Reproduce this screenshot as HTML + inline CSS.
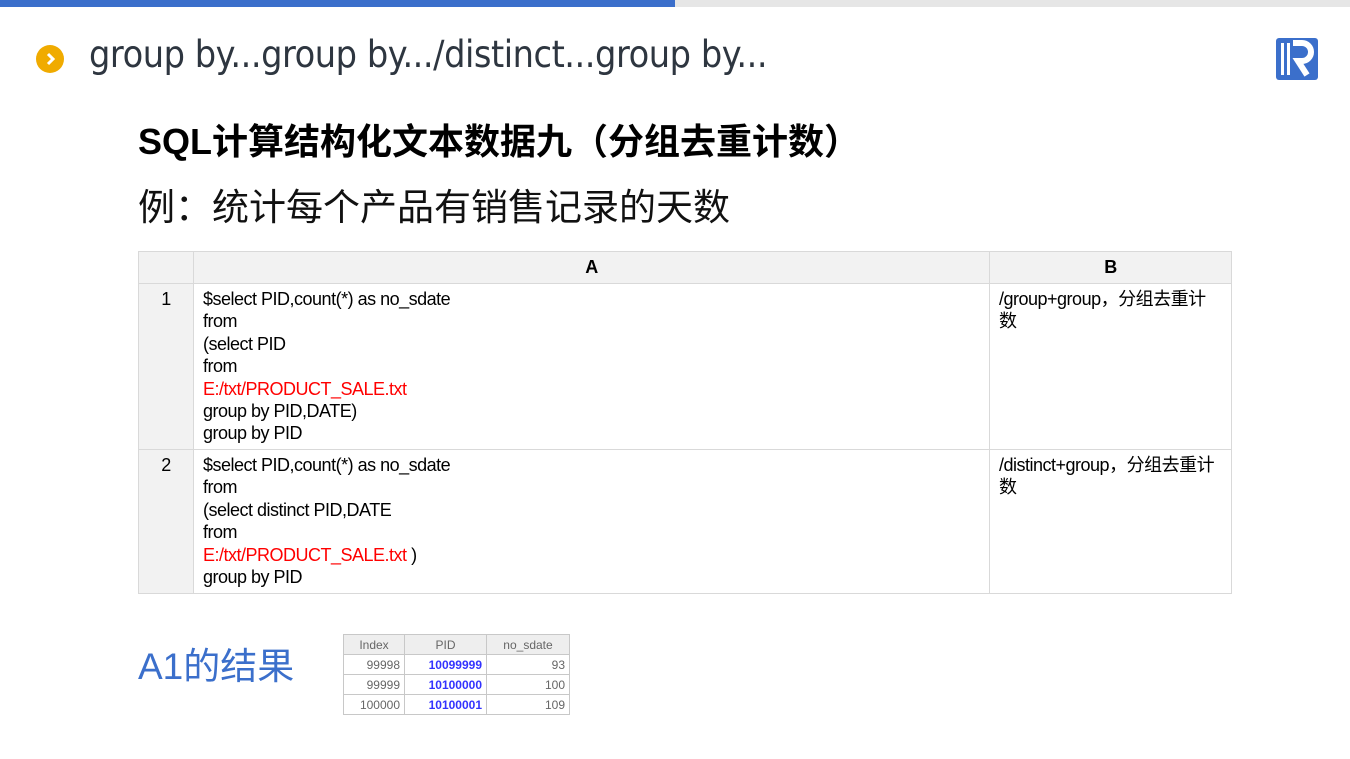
<!DOCTYPE html><html><head><meta charset="utf-8"><style>
body{margin:0;width:1350px;height:759px;background:#fff;position:relative;overflow:hidden;font-family:"Liberation Sans","Noto Sans CJK SC",sans-serif}
.a{position:absolute}
table{border-collapse:collapse;position:absolute}
.t td{border:1px solid #d9d9d9;vertical-align:top;font-size:18px;line-height:22.4px;letter-spacing:-0.5px;padding:4px 9px}
.r{color:#f00}
.s td{border:1px solid #c8c8c8;font-size:12px;padding:0 4px;height:19px;text-align:right;color:#666}
</style></head><body>
<div class="a" style="left:0;top:0;width:675px;height:7px;background:#3b6fcb"></div>
<div class="a" style="left:675px;top:0;width:675px;height:7px;background:#e6e6e6"></div>
<div class="a" style="left:36px;top:45px;width:28px;height:28px;border-radius:50%;background:#f0ab00"></div>
<svg class="a" style="left:36px;top:45px" width="28" height="28"><path d="M12 9l5 5-5 5" stroke="#fff" stroke-width="3" fill="none"/></svg>
<div class="a" style="left:89px;top:33px;font-size:37px;color:#2e3640;font-family:'DejaVu Sans',sans-serif;letter-spacing:-0.5px;transform:scaleX(0.91);transform-origin:0 0;white-space:nowrap">group by...group by.../distinct...group by...</div>
<svg class="a" style="left:1276px;top:38px" width="42" height="42"><rect width="42" height="42" rx="3" fill="#3b6fcb"/><rect x="5" y="5" width="3" height="32" fill="#fff"/><rect x="11" y="5" width="3" height="32" fill="#fff"/><path d="M17 5h9a9 9 0 0 1 0 18h-4l9 14" stroke="#fff" stroke-width="6" fill="none"/></svg>
<div class="a" style="left:138px;top:113px;font-size:36px;font-weight:bold;color:#000;white-space:nowrap">SQL计算结构化文本数据九（分组去重计数）</div>
<div class="a" style="left:138px;top:177px;font-size:37px;color:#111;white-space:nowrap">例：统计每个产品有销售记录的天数</div>
<table class="t" style="left:138px;top:251px;width:1094px">
<tr style="height:32px;background:#f2f2f2;font-weight:bold"><td style="width:36px;background:#f2f2f2"></td><td style="text-align:center;width:777px;font-weight:bold">A</td><td style="text-align:center;font-weight:bold">B</td></tr>
<tr style="height:166px"><td style="background:#f2f2f2;text-align:center">1</td><td>$select PID,count(*) as no_sdate<br>from<br>(select PID<br>from<br><span class="r">E:/txt/PRODUCT_SALE.txt</span><br>group by PID,DATE)<br>group by PID</td><td>/group+group，分组去重计数</td></tr>
<tr style="height:144px"><td style="background:#f2f2f2;text-align:center">2</td><td>$select PID,count(*) as no_sdate<br>from<br>(select distinct PID,DATE<br>from<br><span class="r">E:/txt/PRODUCT_SALE.txt</span> )<br>group by PID</td><td>/distinct+group，分组去重计数</td></tr>
</table>
<div class="a" style="left:138px;top:636px;font-size:37px;color:#3b6fcb">A1的结果</div>
<table class="s" style="left:343px;top:634px;width:227px;background:#fff">
<tr style="background:#eee"><td style="text-align:center;width:52px">Index</td><td style="text-align:center;width:73px">PID</td><td style="text-align:center">no_sdate</td></tr>
<tr><td>99998</td><td style="color:#3333ff;font-weight:bold">10099999</td><td>93</td></tr>
<tr><td>99999</td><td style="color:#3333ff;font-weight:bold">10100000</td><td>100</td></tr>
<tr><td>100000</td><td style="color:#3333ff;font-weight:bold">10100001</td><td>109</td></tr>
</table>
</body></html>
